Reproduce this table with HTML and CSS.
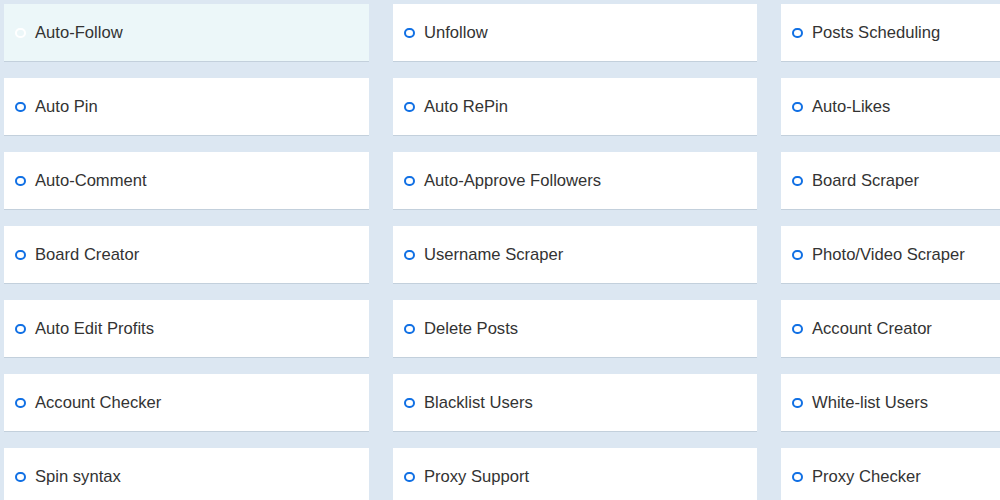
FILE: index.html
```html
<!DOCTYPE html>
<html>
<head>
<meta charset="utf-8">
<link rel="stylesheet" href="styles.css">
</head>
<body>
<div class="grid">
  <div class="card active"><span class="dot"></span>Auto-Follow</div>
  <div class="card"><span class="dot"></span>Unfollow</div>
  <div class="card"><span class="dot"></span>Posts Scheduling</div>
  <div class="card"><span class="dot"></span>Auto Pin</div>
  <div class="card"><span class="dot"></span>Auto RePin</div>
  <div class="card"><span class="dot"></span>Auto-Likes</div>
  <div class="card"><span class="dot"></span>Auto-Comment</div>
  <div class="card"><span class="dot"></span>Auto-Approve Followers</div>
  <div class="card"><span class="dot"></span>Board Scraper</div>
  <div class="card"><span class="dot"></span>Board Creator</div>
  <div class="card"><span class="dot"></span>Username Scraper</div>
  <div class="card"><span class="dot"></span>Photo/Video Scraper</div>
  <div class="card"><span class="dot"></span>Auto Edit Profits</div>
  <div class="card"><span class="dot"></span>Delete Posts</div>
  <div class="card"><span class="dot"></span>Account Creator</div>
  <div class="card"><span class="dot"></span>Account Checker</div>
  <div class="card"><span class="dot"></span>Blacklist Users</div>
  <div class="card"><span class="dot"></span>White-list Users</div>
  <div class="card"><span class="dot"></span>Spin syntax</div>
  <div class="card"><span class="dot"></span>Proxy Support</div>
  <div class="card"><span class="dot"></span>Proxy Checker</div>
</div>
</body>
</html>
```
FILE: styles.css
```css
html, body {
  margin: 0;
  padding: 0;
  background: #dce7f2;
  overflow: hidden;
}
body {
  font-family: "Liberation Sans", Arial, sans-serif;
  width: 1000px;
  height: 500px;
}
.grid {
  box-sizing: border-box;
  width: 1000px;
  display: grid;
  grid-template-columns: 365px 364px 1fr;
  column-gap: 24px;
  row-gap: 16px;
  padding: 4px 0 0 4px;
}
.card {
  box-sizing: border-box;
  height: 58px;
  background: #ffffff;
  border-bottom: 1px solid #c3d0dc;
  display: flex;
  align-items: center;
  padding-left: 11px;
  padding-top: 1px;
  font-size: 16.6px;
  color: #333333;
}
.card.active {
  background: #ecf7f9;
}
.dot {
  box-sizing: border-box;
  width: 10.5px;
  height: 10.5px;
  border: 2.2px solid #1170e4;
  border-radius: 50%;
  margin-right: 9.5px;
  flex: none;
}
.card.active .dot {
  border-color: #ffffff;
}
```
